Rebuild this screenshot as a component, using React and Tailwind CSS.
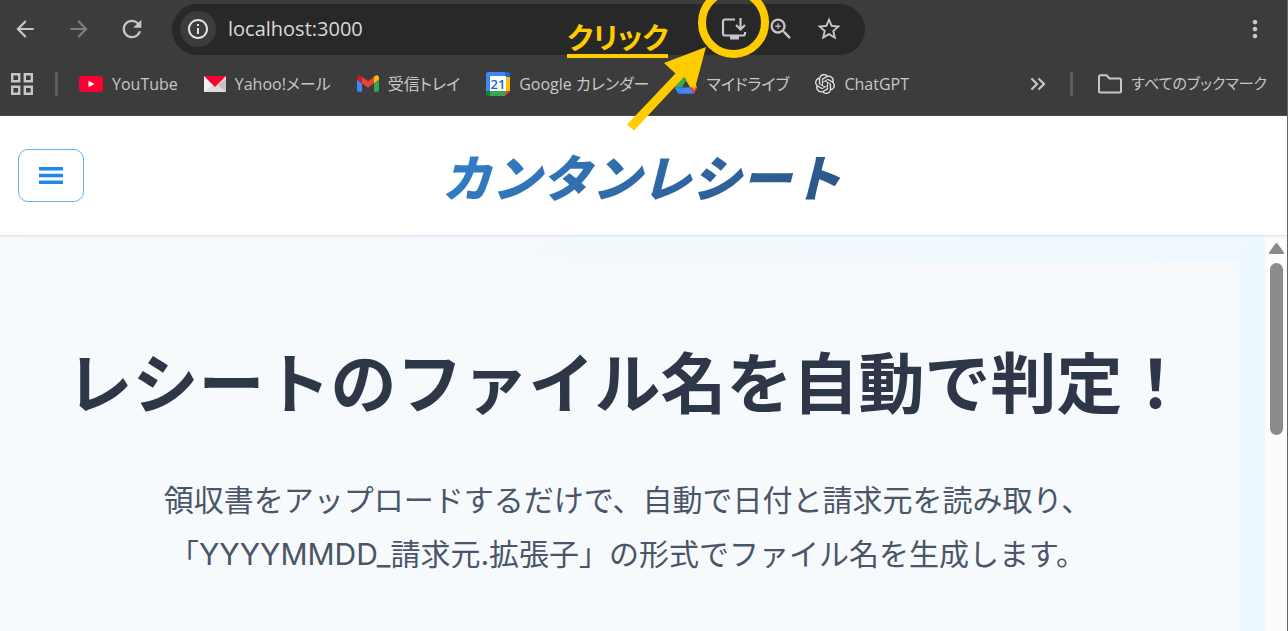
import { SiOpenai } from "react-icons/si";
import { MdArrowBack, MdArrowForward, MdRefresh, MdOutlineInfo, MdZoomIn, MdStarOutline, MdMoreVert } from "react-icons/md";

function YouTubeIcon() {
  return (
    <svg width="24" height="16" viewBox="0 0 24 16" aria-hidden="true">
      <rect width="24" height="16" rx="3.5" fill="#ff0033" />
      <path d="M9.5 4.8 15.5 8l-6 3.2z" fill="#fff" />
    </svg>
  );
}

function YahooMailIcon() {
  return (
    <svg width="22" height="16" viewBox="0 0 22 16" aria-hidden="true">
      <rect width="22" height="16" fill="#f2f2f2" />
      <path d="M22 0v16H0l9-7h4z" fill="#dcdcdc" />
      <path d="M22 3v13l-8-7z" fill="#c2c2c2" />
      <path d="M0 0h22L11 11z" fill="#ff0033" />
    </svg>
  );
}

function GmailIcon() {
  return (
    <svg width="22" height="17" viewBox="52 42 88 66" aria-hidden="true">
      <path fill="#4285f4" d="M58 108h14V74L52 59v43c0 3.32 2.69 6 6 6" />
      <path fill="#34a853" d="M120 108h14c3.32 0 6-2.69 6-6V59l-20 15" />
      <path fill="#fbbc04" d="M120 48v26l20-15v-8c0-7.42-8.47-11.65-14.4-7.2" />
      <path fill="#ea4335" d="M72 74V48l24 18 24-18v26L96 92" />
      <path fill="#c5221f" d="M52 51v8l20 15V48l-5.600-4.200c-5.940-4.450-14.400-.22-14.400 7.200" />
    </svg>
  );
}

function CalendarIcon() {
  return (
    <svg width="24" height="24" viewBox="0 0 24 24" aria-hidden="true">
      <path d="M2 0h17v4H4v15H0V2a2 2 0 0 1 2-2z" fill="#4285f4" />
      <path d="M19 0h3a2 2 0 0 1 2 2v3h-5z" fill="#1967d2" />
      <path d="M20 5h4v14h-4z" fill="#fbbc04" />
      <path d="M4 19h15v5H4z" fill="#34a853" />
      <path d="M0 19h4v5H2a2 2 0 0 1-2-2z" fill="#188038" />
      <path d="M19 19h5l-5 5z" fill="#ea4335" />
      <path d="M4 4h16v15H4z" fill="#fff" />
      <text x="12" y="16.500" textAnchor="middle" fontFamily="Open Sans, sans-serif" fontSize="13" fontWeight="600" fill="#1967d2">21</text>
    </svg>
  );
}

function DriveIcon() {
  return (
    <svg width="22" height="20" viewBox="0 0 87.300 78" aria-hidden="true">
      <path d="m6.600 66.850 3.850 6.650c.8 1.400 1.950 2.500 3.300 3.300l13.750-23.800h-27.500c0 1.550.4 3.100 1.200 4.500z" fill="#4285f4" />
      <path d="m43.650 25-13.750-23.800c-1.350.8-2.500 1.900-3.300 3.300l-25.400 44a9.060 9.060 0 0 0-1.200 4.500h27.500z" fill="#34a853" />
      <path d="m73.550 76.800c1.350-.8 2.500-1.900 3.300-3.300l1.600-2.750 7.650-13.250c.8-1.400 1.200-2.950 1.200-4.500h-27.502l5.852 11.500z" fill="#ea4335" />
      <path d="m43.650 25 13.750-23.800c-1.350-.8-2.900-1.200-4.500-1.200h-18.500c-1.600 0-3.150.45-4.500 1.200z" fill="#188038" />
      <path d="m59.800 53h-32.300l-13.750 23.800c1.350.8 2.900 1.200 4.500 1.200h50.800c1.600 0 3.150-.45 4.500-1.200z" fill="#4285f4" />
      <path d="m73.400 26.500-12.700-22c-.8-1.400-1.950-2.500-3.300-3.300l-13.750 23.800 16.150 28h27.450c0-1.550-.4-3.100-1.200-4.500z" fill="#fbbc04" />
    </svg>
  );
}

function InstallIcon() {
  return (
    <svg width="26" height="24" viewBox="0 0 26 24" fill="none" stroke="#c7c7c7" strokeWidth="2.200" aria-hidden="true">
      <path d="M14 2.500H4a2 2 0 0 0-2 2v12a2 2 0 0 0 2 2h18a2 2 0 0 0 2-2V15" />
      <path d="M19.500 1v11M15 8l4.500 4.500L24 8" />
      <path d="M9 19h9v3.500H9z" fill="#c7c7c7" stroke="none" />
    </svg>
  );
}

function AppsIcon() {
  return (
    <svg width="22" height="22" viewBox="0 0 22 22" fill="none" stroke="#c7c7c7" strokeWidth="2.400" aria-hidden="true">
      <path d="M1.200 1.200h7v7h-7zM13.800 1.200h7v7h-7zM1.200 13.800h7v7h-7zM13.800 13.800h7v7h-7z" />
    </svg>
  );
}

function FolderIcon() {
  return (
    <svg width="24" height="20" viewBox="0 0 24 20" fill="none" stroke="#c7c7c7" strokeWidth="2" strokeLinejoin="round" aria-hidden="true">
      <path d="M1 17.500V2.500A1.200 1.200 0 0 1 2.200 1.300H8.500L11.500 4.500H21.800A1.200 1.200 0 0 1 23 5.700V17.500A1 1 0 0 1 22 18.500H2A1 1 0 0 1 1 17.500z" />
    </svg>
  );
}

const bookmarks = [
  { name: "YouTube", icon: <YouTubeIcon /> },
  { name: "Yahoo!メール", icon: <YahooMailIcon /> },
  { name: "受信トレイ", icon: <GmailIcon /> },
  { name: "Google カレンダー", icon: <CalendarIcon /> },
  { name: "マイドライブ", icon: <DriveIcon /> },
  { name: "ChatGPT", icon: <SiOpenai size={20} color="#e8e8e8" aria-hidden="true" /> },
];

function Browser() {
  return (
    <header className="relative z-20 border-b border-[#4a4a4a] bg-[#3c3c3c] text-[#c7c7c7]">
      <div className="flex h-14 items-center pt-0.5 pr-[18px] pl-3">
        <button aria-label="戻る" className="mr-7"><MdArrowBack size={26} /></button>
        <button aria-label="進む" className="mr-[26px] text-[#7d7d7d]"><MdArrowForward size={26} /></button>
        <button aria-label="再読み込み" className="mr-[26px]"><MdRefresh size={28} /></button>
        <div className="flex h-[51px] w-[693px] items-center rounded-full bg-[#282828] pr-[22px] pl-2">
          <button aria-label="サイト情報" className="flex size-9 shrink-0 items-center justify-center rounded-full bg-[#3c3c3c] text-[#e3e3e3]">
            <MdOutlineInfo size={24} />
          </button>
          <input aria-label="アドレス" defaultValue="localhost:3000" className="ml-3 min-w-0 flex-1 bg-transparent text-xl text-[#dadada] outline-none" />
          <div className="flex items-center gap-5">
            <button aria-label="アプリをインストール"><InstallIcon /></button>
            <button aria-label="ズーム"><MdZoomIn size={28} /></button>
            <button aria-label="ブックマークに追加"><MdStarOutline size={28} /></button>
          </div>
        </div>
        <button aria-label="メニュー" className="ml-auto"><MdMoreVert size={28} /></button>
      </div>
      <nav aria-label="ブックマーク" className="flex h-[59px] items-center pr-5 pb-1 pl-[11px] text-base [font-feature-settings:'palt']">
        <button aria-label="アプリ"><AppsIcon /></button>
        <span className="mr-[21px] ml-[22px] h-6 w-[3px] rounded-full bg-[#5e5e5e]" />
        <div className="flex items-center gap-[26px]">
          {bookmarks.map((b) => (
            <a key={b.name} href="#" className="flex items-center gap-[9px] whitespace-nowrap">
              {b.icon}
              <span>{b.name}</span>
            </a>
          ))}
        </div>
        <button aria-label="その他のブックマーク" className="ml-auto">
          <svg width="16" height="14" viewBox="0 0 16 14" fill="none" stroke="#c7c7c7" strokeWidth="2.200" aria-hidden="true">
            <path d="M1.500 1.500 7 7l-5.500 5.500M8.500 1.500 14 7l-5.500 5.500" />
          </svg>
        </button>
        <span className="mr-[25px] ml-6 h-6 w-[3px] rounded-full bg-[#5e5e5e]" />
        <a href="#" className="flex items-center gap-[9px] text-[15px] whitespace-nowrap"><FolderIcon />すべてのブックマーク</a>
      </nav>
    </header>
  );
}

function ClickHint() {
  return (
    <div className="pointer-events-none absolute top-0 left-[560px] z-30">
      <svg width="220" height="140" viewBox="0 0 220 140" aria-hidden="true">
        <circle cx="173.500" cy="22.500" r="31.500" fill="none" stroke="#ffcc00" strokeWidth="8" />
        <path d="M67.500 125 L74 130.500 L124 77 L134.500 90 L146 47 L104 63 L115.500 73.500 L67 124.500z" fill="#ffcc00" />
      </svg>
      <span className="absolute top-[22px] left-[7px] border-b-4 border-[#ffcc00] text-[29px] leading-8 font-bold whitespace-nowrap text-[#ffcc00] [font-feature-settings:'palt']">クリック</span>
    </div>
  );
}

export default function App() {
  return (
    <div className="relative flex min-h-screen flex-col overflow-hidden border-r border-[#666] bg-white font-['Open_Sans','Noto_Sans_CJK_JP',sans-serif]">
      <Browser />
      <ClickHint />
      <div className="relative z-10 flex h-[120px] items-center justify-center border-b border-[#dde4ee] bg-white shadow-xs">
        <button aria-label="メニューを開く" className="absolute left-[18px] flex h-[53px] w-[66px] items-center justify-center rounded-[10px] border border-[#63b3ed] bg-white">
          <svg width="24" height="18" viewBox="0 0 24 18" fill="#1e88e5" aria-hidden="true">
            <path d="M0 0h24v3.500H0zM0 6.700h24v3.500H0zM0 13.400h24v3.500H0z" />
          </svg>
        </button>
        <div className="bg-linear-135 from-[#3182ce] to-[#2c5282] bg-clip-text pr-3 pl-2 font-['Noto_Sans_CJK_JP',sans-serif] text-[50px] font-black text-transparent italic">カンタンレシート</div>
      </div>
      <div className="flex flex-1">
        <main className="flex-1 bg-linear-135 from-[#f7fafc] to-[#ebf8ff] pt-[26px] pr-[26px] pl-4">
          <section className="h-full bg-[#f7fafc] pt-[67px] text-center">
            <h1 className="font-['Noto_Sans_CJK_JP',sans-serif] text-[66px] leading-[100px] font-bold whitespace-nowrap text-[#2d3748]">レシートのファイル名を自動で判定！</h1>
            <p className="mt-11 font-['Inter','Noto_Sans_CJK_JP',sans-serif] text-[30px] leading-[54px] text-[#4a5568]">
              領収書をアップロードするだけで、自動で日付と請求元を読み取り、<br />
              「YYYYMMDD_請求元.拡張子」の形式でファイル名を生成します。
            </p>
          </section>
        </main>
        <div aria-hidden="true" className="flex w-[22px] flex-col items-center bg-[#fcfcfc] pt-[7px]">
          <svg width="15" height="11" viewBox="0 0 15 11"><path d="M6.500.6a1.300 1.300 0 0 1 2 0L14.700 9a1.200 1.200 0 0 1-1 2H1.300a1.200 1.200 0 0 1-1-2z" fill="#8b8b8b" /></svg>
          <span className="mt-[9px] h-[172px] w-[13px] rounded-full bg-[#8b8b8b]" />
        </div>
      </div>
    </div>
  );
}
